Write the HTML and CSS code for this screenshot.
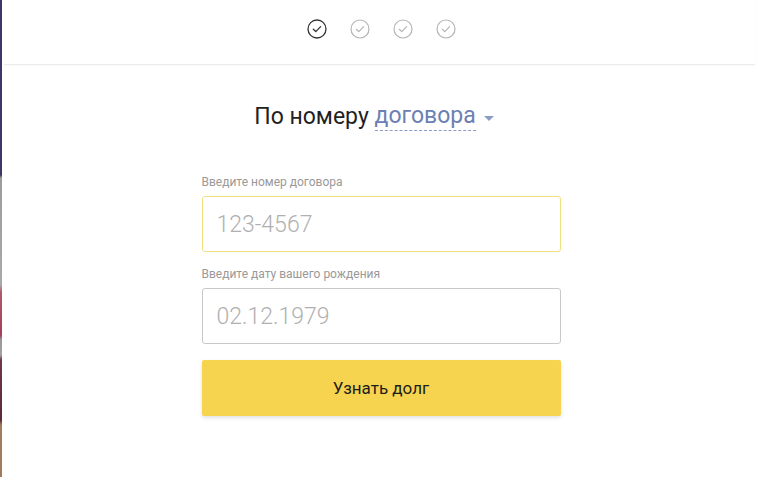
FILE: index.html
```html
<!DOCTYPE html>
<html lang="ru">
<head>
<meta charset="utf-8">
<title>Узнать долг</title>
<link rel="stylesheet" href="styles.css">
</head>
<body>
<div class="edge"></div>
<div class="main">
  <header class="steps">
    <span class="step step-active">
      <svg viewBox="0 0 20 20" width="20" height="20"><circle cx="10" cy="10" r="9" fill="none" stroke="currentColor" stroke-width="1.3"/><path d="M6.3 10.3 L8.8 12.6 L13.6 7.6" fill="none" stroke="currentColor" stroke-width="1.3" stroke-linecap="round" stroke-linejoin="round"/></svg>
    </span>
    <span class="step">
      <svg viewBox="0 0 20 20" width="20" height="20"><circle cx="10" cy="10" r="9" fill="none" stroke="currentColor" stroke-width="1.2"/><path d="M6.3 10.3 L8.8 12.6 L13.6 7.6" fill="none" stroke="currentColor" stroke-width="1.2" stroke-linecap="round" stroke-linejoin="round"/></svg>
    </span>
    <span class="step">
      <svg viewBox="0 0 20 20" width="20" height="20"><circle cx="10" cy="10" r="9" fill="none" stroke="currentColor" stroke-width="1.2"/><path d="M6.3 10.3 L8.8 12.6 L13.6 7.6" fill="none" stroke="currentColor" stroke-width="1.2" stroke-linecap="round" stroke-linejoin="round"/></svg>
    </span>
    <span class="step">
      <svg viewBox="0 0 20 20" width="20" height="20"><circle cx="10" cy="10" r="9" fill="none" stroke="currentColor" stroke-width="1.2"/><path d="M6.3 10.3 L8.8 12.6 L13.6 7.6" fill="none" stroke="currentColor" stroke-width="1.2" stroke-linecap="round" stroke-linejoin="round"/></svg>
    </span>
  </header>

  <section class="content">
    <h1 class="title">По номеру <span class="choice">договора</span><span class="caret"></span></h1>

    <form class="form">
      <label class="label" for="contract">Введите номер договора</label>
      <input class="field field-focus" id="contract" type="text" placeholder="123-4567">

      <label class="label" for="birth">Введите дату вашего рождения</label>
      <input class="field" id="birth" type="text" placeholder="02.12.1979">

      <button class="btn" type="button">Узнать долг</button>
    </form>
  </section>
</div>
</body>
</html>
```

FILE: styles.css
```css
html, body {
  margin: 0;
  padding: 0;
  height: 100%;
  background: #ffffff;
}

body {
  display: flex;
  font-family: Roboto, "Noto Sans", "Liberation Sans", sans-serif;
  color: #222;
}

.edge {
  width: 2px;
  flex: 0 0 2px;
  background: linear-gradient(to bottom,
    #3d3767 0, #3d3767 175px,
    #9c9c9c 178px, #a9a9a9 285px,
    #b05a6a 292px, #a2405c 335px,
    #9a9a9a 340px, #a0a0a0 355px,
    #6e3848 360px, #5a2a3a 420px,
    #a27a5c 425px, #a27a5c 100%);
}

.main {
  flex: 1;
  display: flex;
  flex-direction: column;
  padding: 0 3px 0 2px;
}

.steps {
  height: 65px;
  box-sizing: border-box;
  padding: 19px 0 0 4px;
  display: flex;
  justify-content: center;
  align-items: flex-start;
  gap: 23px;
  border-bottom: 1px solid #ececec;
  box-shadow: 0 1px 2px rgba(0, 0, 0, 0.03);
}

.step {
  display: block;
  width: 20px;
  height: 20px;
  color: #b4b4b4;
}

.step svg {
  display: block;
}

.step-active {
  color: #333;
}

.content {
  display: flex;
  flex-direction: column;
  align-items: center;
  padding-left: 3px;
}

.title {
  margin: 38px 14px 0 0;
  font-size: 23px;
  line-height: 26px;
  font-weight: 400;
  color: #1f1f1f;
  display: flex;
  align-items: center;
  white-space: pre;
}

.choice {
  color: #6c80b3;
  border-bottom: 1px dashed #8c9cc6;
  padding-bottom: 1px;
}

.caret {
  width: 0;
  height: 0;
  margin-left: 8px;
  margin-top: 3px;
  border-left: 5px solid transparent;
  border-right: 5px solid transparent;
  border-top: 5px solid #8c9cc6;
}

.form {
  width: 359px;
  margin-top: 43px;
  display: flex;
  flex-direction: column;
}

.label {
  font-size: 12px;
  line-height: 16px;
  color: #999;
  margin-bottom: 6px;
}

.field {
  box-sizing: border-box;
  height: 56px;
  width: 100%;
  margin: 0 0 14px;
  padding: 0 14px;
  border: 1px solid #c9c9c9;
  border-radius: 3px;
  outline: none;
  font-family: Roboto, "Noto Sans", "Liberation Sans", sans-serif;
  font-size: 23px;
  font-weight: 300;
  color: #333;
  background: #fff;
}

.field::placeholder {
  color: #b0b0b0;
  font-weight: 300;
}

.field-focus {
  border-color: #f2e07e;
}

.btn {
  margin-top: 2px;
  height: 56px;
  border: none;
  border-radius: 2px;
  background: #f6d44f;
  box-shadow: 0 2px 4px rgba(0, 0, 0, 0.12);
  font-family: Roboto, "Noto Sans", "Liberation Sans", sans-serif;
  font-size: 17px;
  font-weight: 400;
  color: #1d1d1d;
  cursor: pointer;
}
```
